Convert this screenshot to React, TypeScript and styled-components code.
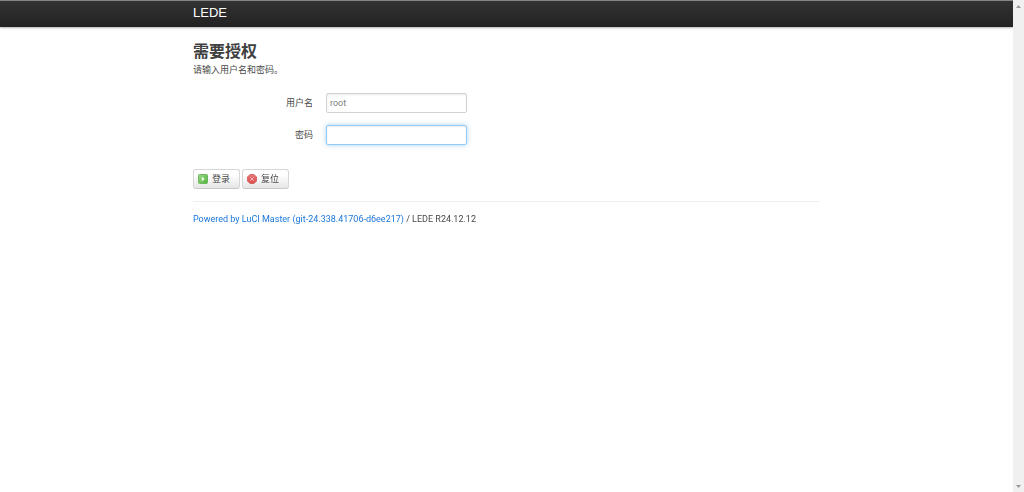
import React from "react";
import styled, { createGlobalStyle } from "styled-components";

const GlobalStyle = createGlobalStyle`
  * { box-sizing: border-box; }
  html, body { margin: 0; background: #fff; }
  body, input, button {
    font-family: Roboto, "Liberation Sans", Arial, "Noto Sans CJK SC", sans-serif;
    font-size: 9px;
    line-height: 12px;
    color: #4a4a4a;
  }
`;

const Shell = styled.div`
  display: flex;
  height: 100vh;
  overflow: hidden;
`;

const Page = styled.div`
  flex: 1;
  min-width: 0;
`;

const Container = styled.div`
  width: 100%;
  max-width: 627px;
  margin: 0 auto;
`;

const Header = styled.header`
  height: 27px;
  border-top: 1px solid #858585;
  background: linear-gradient(#333, #222);
  box-shadow: 0 1px 2px rgba(0, 0, 0, 0.3);
`;

const Brand = styled.a`
  display: inline-block;
  padding: 4px 0;
  font-family: "Liberation Sans", Arial, sans-serif;
  font-size: 13px;
  line-height: 16px;
  color: #fff;
  text-decoration: none;
`;

const Main = styled.main`
  padding-top: 13px;
`;

const Title = styled.h2`
  margin: 0;
  font-size: 16px;
  line-height: 24px;
  font-weight: 700;
  color: #404040;
`;

const Intro = styled.p`
  margin: 0 0 17px;
`;

const Field = styled.div`
  display: flex;
  align-items: center;
  gap: 13px;
  margin-bottom: 12px;
`;

const Label = styled.label`
  width: 120px;
  text-align: right;
`;

const TextInput = styled.input`
  width: 141px;
  height: 20px;
  padding: 0 3px;
  color: #808080;
  background: #fff;
  border: 1px solid #d2d2d2;
  border-radius: 2px;
  outline: none;
  box-shadow: inset 0 1px 2px rgba(0, 0, 0, 0.08);

  &:focus {
    border-color: #94cbf5;
    box-shadow: inset 0 1px 2px rgba(0, 0, 0, 0.08), 0 0 5px rgba(82, 168, 236, 0.5);
  }
`;

const Actions = styled.div`
  display: flex;
  gap: 2px;
  margin-top: 24px;
`;

const Button = styled.button`
  display: flex;
  align-items: center;
  gap: 4px;
  width: 47px;
  height: 20px;
  padding: 0 4px;
  white-space: nowrap;
  border: 1px solid #d6d6d6;
  border-bottom-color: #c8c8c8;
  border-radius: 3px;
  background: linear-gradient(#fff 25%, #e6e6e6);
`;

const Icon = styled.svg`
  flex: none;
  width: 10px;
  height: 10px;
`;

const Footer = styled.footer`
  margin-top: 12px;
  padding-top: 11px;
  border-top: 1px solid #f0f0f0;
`;

const FooterLink = styled.a`
  color: #1a76d9;
  text-decoration: none;
`;

const Scrollbar = styled.div`
  flex: none;
  display: flex;
  flex-direction: column;
  justify-content: space-between;
  align-items: center;
  width: 11px;
  padding: 5px 0 4px;
  background: #f0f0f0;
`;

const Arrow = styled.svg`
  display: block;
  width: 5px;
  height: 3px;
  fill: #999;
`;

function LoginIcon() {
  return (
    <Icon viewBox="0 0 10 10" aria-hidden="true">
      <defs>
        <linearGradient id="green" x1="0" y1="0" x2="1" y2="1">
          <stop offset="0" stopColor="#9bdc8a" />
          <stop offset="1" stopColor="#4fb336" />
        </linearGradient>
      </defs>
      <rect x="0.5" y="0.5" width="9" height="9" rx="1" fill="url(#green)" stroke="#6fb660" />
      <path d="M4 3L6.5 5L4 7Z" fill="#fff" stroke="#d9f2d2" strokeWidth="0.5" />
    </Icon>
  );
}

function ResetIcon() {
  return (
    <Icon viewBox="0 0 10 10" aria-hidden="true">
      <defs>
        <linearGradient id="red" x1="0" y1="0" x2="0" y2="1">
          <stop offset="0" stopColor="#ea7777" />
          <stop offset="1" stopColor="#dc4a4a" />
        </linearGradient>
      </defs>
      <path d="M3 .5H7L9.5 3V7L7 9.5H3L.5 7V3Z" fill="url(#red)" stroke="#cf6a6a" />
      <path d="M3.2 3.2L6.8 6.8M6.8 3.2L3.2 6.8" stroke="#f5b5b5" strokeWidth="1" />
    </Icon>
  );
}

export default function App() {
  return (
    <>
      <GlobalStyle />
      <Shell>
        <Page>
          <Header>
            <Container>
              <Brand href="#">LEDE</Brand>
            </Container>
          </Header>
          <Container>
            <Main>
              <form onSubmit={(event) => event.preventDefault()}>
                <Title>需要授权</Title>
                <Intro>请输入用户名和密码。</Intro>
                <Field>
                  <Label htmlFor="username">用户名</Label>
                  <TextInput id="username" type="text" defaultValue="root" />
                </Field>
                <Field>
                  <Label htmlFor="password">密码</Label>
                  <TextInput id="password" type="password" autoFocus />
                </Field>
                <Actions>
                  <Button type="submit"><LoginIcon />登录</Button>
                  <Button type="reset"><ResetIcon />复位</Button>
                </Actions>
              </form>
            </Main>
            <Footer>
              <FooterLink href="#">Powered by LuCI Master (git-24.338.41706-d6ee217)</FooterLink> / LEDE R24.12.12
            </Footer>
          </Container>
        </Page>
        <Scrollbar aria-hidden="true">
          <Arrow viewBox="0 0 5 3"><path d="M0 3L2.5 0L5 3Z" /></Arrow>
          <Arrow viewBox="0 0 5 3"><path d="M0 0L2.5 3L5 0Z" /></Arrow>
        </Scrollbar>
      </Shell>
    </>
  );
}
